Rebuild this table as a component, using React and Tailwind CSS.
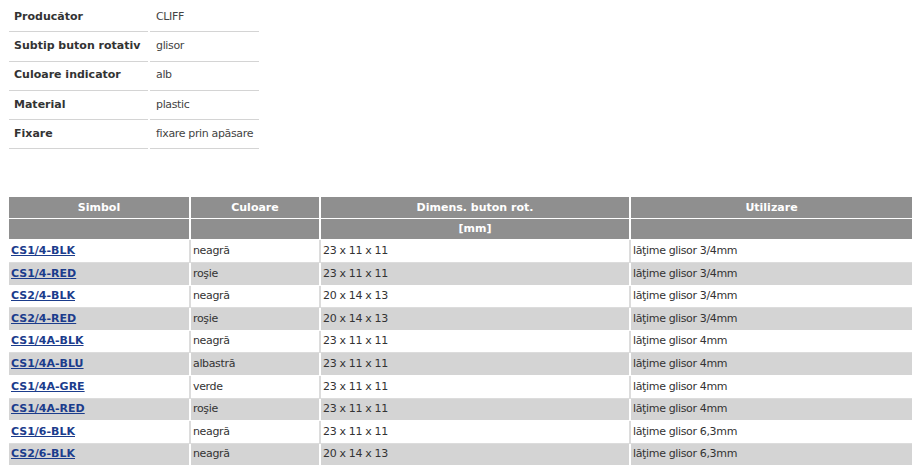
import React from "react";

const props = [
  ["Producător", "CLIFF"],
  ["Subtip buton rotativ", "glisor"],
  ["Culoare indicator", "alb"],
  ["Material", "plastic"],
  ["Fixare", "fixare prin apăsare"],
];

const rows = [
  ["CS1/4-BLK", "neagră", "23 x 11 x 11", "lăţime glisor 3/4mm"],
  ["CS1/4-RED", "roşie", "23 x 11 x 11", "lăţime glisor 3/4mm"],
  ["CS2/4-BLK", "neagră", "20 x 14 x 13", "lăţime glisor 3/4mm"],
  ["CS2/4-RED", "roşie", "20 x 14 x 13", "lăţime glisor 3/4mm"],
  ["CS1/4A-BLK", "neagră", "23 x 11 x 11", "lăţime glisor 4mm"],
  ["CS1/4A-BLU", "albastră", "23 x 11 x 11", "lăţime glisor 4mm"],
  ["CS1/4A-GRE", "verde", "23 x 11 x 11", "lăţime glisor 4mm"],
  ["CS1/4A-RED", "roşie", "23 x 11 x 11", "lăţime glisor 4mm"],
  ["CS1/6-BLK", "neagră", "23 x 11 x 11", "lăţime glisor 6,3mm"],
  ["CS2/6-BLK", "neagră", "20 x 14 x 13", "lăţime glisor 6,3mm"],
];

const cols = "grid grid-cols-[180px_128px_308px_281px] gap-x-[2px]";

export default function App() {
  return (
    <div
      className="w-[920px] h-[476px] bg-white overflow-hidden pl-[9px] pt-[3px] text-[11px] text-[#333] whitespace-nowrap"
      style={{ fontFamily: '"DejaVu Sans", Verdana, sans-serif' }}
    >
      <div className="w-[250px] flex flex-col">
        {props.map(([k, v]) => (
          <div key={k} className="grid grid-cols-[139px_109px] gap-x-[2px]">
            <div className="h-[29.3px] flex items-center pl-[5px] font-bold text-[#333] border-b border-[#d4d4d4]">
              {k}
            </div>
            <div className="h-[29.3px] flex items-center pl-[6px] text-[#444] tracking-[-0.35px] border-b border-[#d4d4d4]">
              {v}
            </div>
          </div>
        ))}
      </div>

      <div className="mt-[48px] w-[903px]">
        <div className={`${cols} bg-white`}>
          {["Simbol", "Culoare", "Dimens. buton rot.", "Utilizare"].map((h) => (
            <div key={h} className="h-[21px] bg-[#8f8f8f] text-white font-bold flex items-center justify-center">
              {h}
            </div>
          ))}
        </div>
        <div className={`${cols} bg-white mt-[1px]`}>
          {["", "", "[mm]", ""].map((h, i) => (
            <div key={i} className="h-[20px] bg-[#8f8f8f] text-white font-bold flex items-center justify-center">
              {h}
            </div>
          ))}
        </div>
        <div className="h-[1px]" />
        {rows.map((r, i) => {
          const grey = i % 2 === 1;
          return (
            <div
              key={r[0]}
              className={`${cols} ${grey ? "bg-white" : "bg-[#dcdcdc]"} pb-[1px]`}
            >
              {r.map((c, j) => (
                <div
                  key={j}
                  className={`h-[21.6px] flex items-center pl-[2px] ${grey ? "bg-[#d4d4d4]" : "bg-white"} ${j === 0 ? "" : "tracking-[-0.35px]"}`}
                >
                  {j === 0 ? (
                    <a href="#" className="font-bold text-[#1b3c8c] underline">
                      {c}
                    </a>
                  ) : (
                    c
                  )}
                </div>
              ))}
            </div>
          );
        })}
      </div>
    </div>
  );
}
